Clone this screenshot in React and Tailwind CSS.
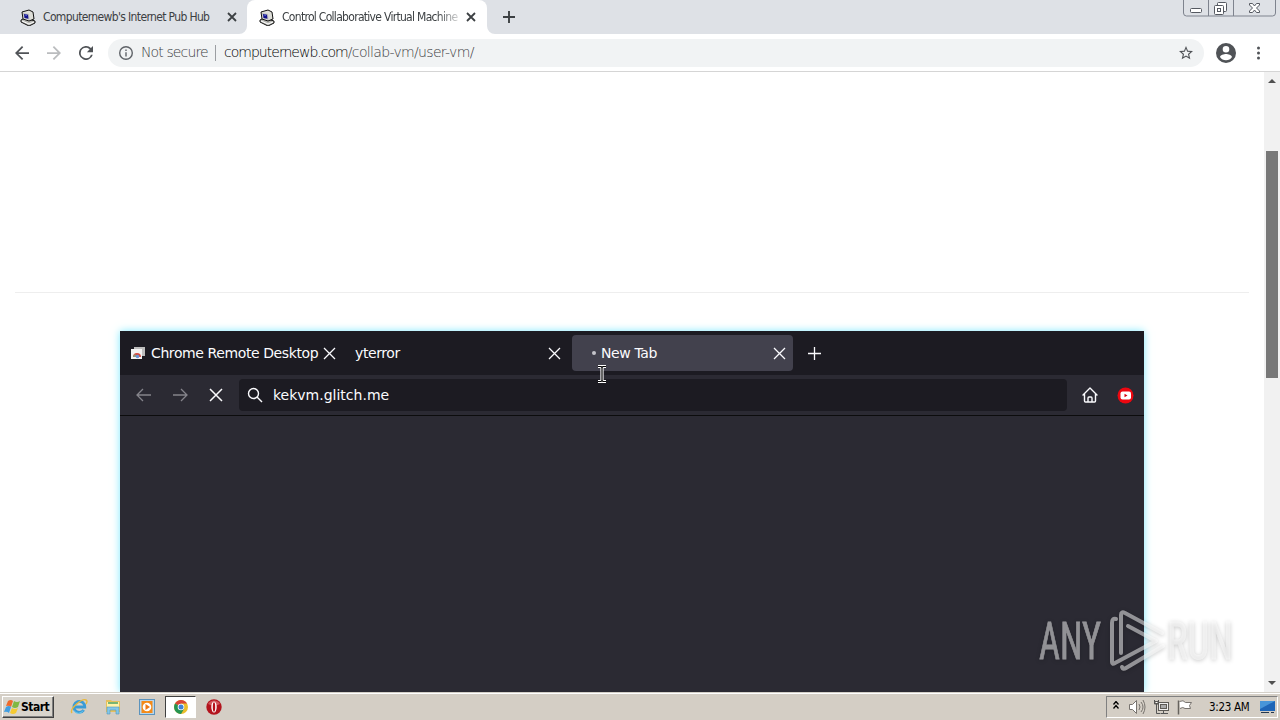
import React from 'react';

const uiFont = "font-['DejaVu_Sans_Condensed','DejaVu_Sans',sans-serif] [font-stretch:condensed]";
const lightFont = "font-['DejaVu_Sans_Light','DejaVu_Sans',sans-serif] [font-stretch:normal] font-extralight";

function PcIcon() {
  return (
    <svg width="16" height="17" viewBox="0 0 16 17" className="shrink-0">
      <path d="M1 11 5 9l10 3v2l-6 3-8-4z" fill="#b9b9b5" stroke="#111" strokeWidth="1" />
      <path d="m2 12 7 3 5-2" fill="none" stroke="#fff" />
      <path d="m2 3 7-2 4 2 1 7-5 2-6-2z" fill="#deded8" stroke="#111" />
      <path d="m3 4 6 1 .5 6L4 9z" fill="#bbb" />
      <path d="m4 5 4 .7.4 4L4.500 9z" fill="#10108c" />
      <path d="m5 6 2 .4" stroke="#5b68d8" />
    </svg>
  );
}

function Close({ size = 8, width = 1.8, color = '#3c4043' }) {
  return (
    <svg width={size} height={size} viewBox="0 0 8 8" fill="none" className="shrink-0 overflow-visible">
      <path d="m0 0 8 8M8 0 0 8" stroke={color} strokeWidth={width} vectorEffect="non-scaling-stroke" />
    </svg>
  );
}

function TabStrip() {
  return (
    <div className="flex h-[34px] shrink-0 bg-[#dee1e6] text-[12px] text-[#3c4043]">
      <div className="flex h-full w-[247px] items-center pl-5">
        <PcIcon />
        <span className="ml-[7px] w-[185px] whitespace-nowrap tracking-[-0.64px]">Computernewb's Internet Pub Hub</span>
        <Close />
      </div>
      <div className="relative flex h-full w-[240px] items-center rounded-t-lg bg-white pl-3">
        <PcIcon />
        <span className="ml-[7px] w-[178px] whitespace-nowrap tracking-[-0.7px] [mask-image:linear-gradient(to_right,#000_155px,transparent_182px)]">
          Control Collaborative Virtual Machine
        </span>
        <span className="ml-[7px] flex"><Close /></span>
        <svg width="8" height="8" className="absolute bottom-0 -left-2"><path d="M8 0a8 8 0 0 1-8 8h8z" fill="#fff" /></svg>
        <svg width="8" height="8" className="absolute bottom-0 -right-2"><path d="M0 0a8 8 0 0 0 8 8H0z" fill="#fff" /></svg>
      </div>
      <svg width="12" height="12" viewBox="0 0 12 12" className="mt-[11px] ml-4"><path d="M6 0v12M0 6h12" stroke="#3c4043" strokeWidth="1.9" /></svg>
      <svg width="94" height="17" viewBox="0 0 94 17" fill="none" stroke="#7e838e" className="mr-1 ml-auto">
        <path d="M1.500 0v13q0 3 3 3h86q3 0 3-3V0M26.500 0v16M51.500 0v16" />
        <rect x="8.500" y="8.500" width="11" height="4" rx="1" fill="#fff" stroke="#555961" />
        <rect x="35.500" y="2.500" width="9" height="9" rx="1" fill="#fff" stroke="#555961" />
        <rect x="32.500" y="5.500" width="9" height="9" rx="1" fill="#fff" stroke="#555961" />
        <rect x="35.500" y="8.500" width="3" height="3" stroke="#555961" />
        <path d="M67.500 3.500h3l2 2.500 2-2.500h3v1.500l-3 3 3 3v1.500h-3l-2-2.500-2 2.500h-3V11l3-3-3-3z" fill="#fff" stroke="#555961" />
      </svg>
    </div>
  );
}

function AddressBar() {
  return (
    <div className="flex h-[38px] shrink-0 items-center border-b border-[#d5d5d5] bg-white">
      <svg width="14" height="14" viewBox="4 4 16 16" className="ml-[15px]"><path fill="#505357" d="M20 11H7.830l5.590-5.590L12 4l-8 8 8 8 1.410-1.410L7.830 13H20z" /></svg>
      <svg width="14" height="14" viewBox="4 4 16 16" className="ml-[18px]"><path fill="#babcbe" d="m12 4-1.410 1.410L16.170 11H4v2h12.170l-5.580 5.590L12 20l8-8z" /></svg>
      <svg width="14" height="14" viewBox="4 4 16 16" className="ml-[18px]"><path fill="#505357" d="M17.650 6.350A8 8 0 1 0 19.730 14h-2.080A6 6 0 1 1 12 6c1.660 0 3.140.69 4.220 1.780L13 11h7V4z" /></svg>
      <div className="ml-[15px] flex h-7 w-[1096px] items-center rounded-full bg-[#f1f3f4] pl-[11px] text-[14px] text-[#3c4043]">
        <svg width="14" height="14" viewBox="2 2 20 20" className="shrink-0"><path fill="#5f6368" d="M11 7h2v2h-2zm0 4h2v6h-2zm1-9a10 10 0 1 0 0 20 10 10 0 0 0 0-20m0 18a8 8 0 1 1 0-16 8 8 0 0 1 0 16" /></svg>
        <span className={`ml-2 w-[74px] whitespace-nowrap tracking-[-0.88px] ${lightFont}`}>Not secure</span>
        <span className="h-4 w-px shrink-0 bg-[#9b9ea2]" />
        <span className={`ml-2 whitespace-nowrap tracking-[-0.66px] ${lightFont}`}><span className="tracking-[-0.98px] text-black">computernewb.com</span>/collab-vm/user-vm/</span>
        <svg width="14" height="14" viewBox="2 2 20 20" className="mr-[11px] ml-auto"><path fill="#505357" d="m22 9.240-7.190-.62L12 2 9.190 8.630 2 9.240l5.460 4.730L5.820 21 12 17.270 18.180 21l-1.630-7.030zM12 15.400l-3.760 2.270 1-4.280-3.320-2.880 4.380-.38L12 6.100l1.710 4.040 4.380.38-3.320 2.880 1 4.280z" /></svg>
      </div>
      <svg width="20" height="20" viewBox="2 2 20 20" className="ml-3"><path fill="#505357" fillRule="evenodd" d="M12 2a10 10 0 1 0 0 20 10 10 0 0 0 0-20m0 3a3.300 3.300 0 1 1 0 6.600A3.300 3.300 0 0 1 12 5m0 14.200A7.200 7.200 0 0 1 6 16c0-2 4-3.100 6-3.100s6 1.100 6 3.100a7.200 7.200 0 0 1-6 3.200" /></svg>
      <svg width="4" height="14" className="ml-[21px]" fill="#505357"><circle cx="1.500" cy="2" r="1.500" /><circle cx="1.500" cy="7" r="1.500" /><circle cx="1.500" cy="12" r="1.500" /></svg>
    </div>
  );
}

function RemoteScreen() {
  return (
    <div className="ml-[105px] h-[361px] w-[1024px] bg-[#2b2a33] font-['DejaVu_Sans',sans-serif] text-[14px] text-[#fbfbfe] [font-stretch:normal] shadow-[0_0_8px_#7eeaff]">
      <div className="flex h-11 items-center bg-[#1c1b22] tracking-[-0.4px]">
        <svg width="16" height="16" viewBox="0 0 16 16" className="ml-[10px] shrink-0">
          <path d="M4 2h11v9H4z" fill="#bdbdbd" />
          <path d="M1 4h11v10H1z" fill="#f3f3f3" />
          <path d="M3 12a4 4 0 0 1 8 0z" fill="#d44c43" />
          <path d="M3 12a4 4 0 0 1 2-3l2 3z" fill="#8a9a7b" />
          <circle cx="7.500" cy="11.500" r="1.800" fill="#6a92d8" />
        </svg>
        <span className="ml-[5px] w-[173px] whitespace-nowrap">Chrome Remote Desktop</span>
        <Close size={11} width={1.3} color="#fbfbfe" />
        <span className="ml-5 w-[194px]">yterror</span>
        <Close size={11} width={1.3} color="#fbfbfe" />
        <div className="ml-[12px] flex h-9 w-[221px] items-center rounded bg-[#42414d]">
          <span className="ml-5 size-1 rounded-full bg-[#c4c4ca]" />
          <span className="ml-[5px] w-[173px]">New Tab</span>
          <Close size={11} width={1.3} color="#fbfbfe" />
        </div>
        <svg width="13" height="13" className="ml-[15px]"><path d="M6.500 0v13M0 6.500h13" stroke="#fbfbfe" strokeWidth="1.300" /></svg>
      </div>
      <div className="flex h-[41px] items-center border-b border-[#0c0c0d]">
        <svg width="15" height="14" viewBox="0 0 15 14" fill="none" stroke="#85848b" strokeWidth="1.300" className="ml-4"><path d="M15 7H1M7 1 1 7l6 6" /></svg>
        <svg width="15" height="14" viewBox="0 0 15 14" fill="none" stroke="#85848b" strokeWidth="1.300" className="ml-[22px]"><path d="M0 7h14M8 1l6 6-6 6" /></svg>
        <span className="ml-[22px]"><Close size={12} width={1.5} color="#fbfbfe" /></span>
        <div className="ml-[17px] flex h-8 w-[828px] items-center rounded bg-[#1c1b22]">
          <svg width="16" height="16" viewBox="0 0 16 16" fill="none" stroke="#fbfbfe" strokeWidth="1.400" className="ml-2"><circle cx="6.500" cy="6.500" r="5" /><path d="m10 10 5 5" /></svg>
          <span className="ml-[10px]">kekvm.glitch.me</span>
        </div>
        <svg width="16" height="16" viewBox="0 0 16 16" fill="none" stroke="#fbfbfe" strokeWidth="1.400" strokeLinejoin="round" strokeLinecap="round" className="ml-[14.500px]"><path d="m1 8 7-7 7 7M2.500 7v7q0 1 1 1h9q1 0 1-1V7M6 15v-4q0-1 1-1h2q1 0 1 1v4" /></svg>
        <svg width="17" height="17" viewBox="0 0 17 17" className="ml-[19.500px]"><circle cx="8.500" cy="8.500" r="8" fill="#ed0710" /><rect x="3.500" y="4.500" width="10.500" height="8" rx="2" fill="#fff" /><path d="m7.500 6.800 3 1.700-3 1.700z" fill="#d8000c" /></svg>
      </div>
    </div>
  );
}

function Watermark() {
  return (
    <svg width="240" height="90" className="pointer-events-none absolute top-[600px] left-[1025px] overflow-visible drop-shadow-[0_1px_2px_rgba(0,0,0,0.4)]">
      <g opacity="0.5" fill="#fff">
        <text x="14" y="59" fontFamily="Roboto, sans-serif" fontSize="51" stroke="#fff" strokeWidth=".8" textLength="62" lengthAdjust="spacingAndGlyphs">ANY</text>
        <text x="142" y="59" fontFamily="Roboto, sans-serif" fontSize="51" stroke="#fff" strokeWidth=".8" textLength="66" lengthAdjust="spacingAndGlyphs">RUN</text>
        <g fill="none" stroke="#fff" strokeWidth="4" strokeLinejoin="round" strokeLinecap="round">
          <path d="M91 19q-4-1-4 4v39q0 3 3 1l41-22-28-15" />
          <path d="M96 53V15q0-4 4-2l37 20" />
          <path d="M97 67q1 3 4 1l37-22" />
        </g>
      </g>
    </svg>
  );
}

function Page() {
  return (
    <div className="flex h-[620px] shrink-0 bg-white">
      <div className="min-w-0 flex-1 overflow-hidden px-[15px] pt-[220px]">
        <hr className="mb-[38px] border-[#eee]" />
        <RemoteScreen />
      </div>
      <div className="flex w-4 shrink-0 flex-col items-center bg-[#f1f1f1]">
        <svg width="8" height="4" className="mt-[7px]"><path d="m4 0 4 4H0z" fill="#505050" /></svg>
        <div className="mt-[68px] h-[227px] w-3 bg-[#787878]" />
        <svg width="8" height="4" className="mt-auto mb-[7px]"><path d="M0 0h8L4 4z" fill="#505050" /></svg>
      </div>
    </div>
  );
}

function TaskBar() {
  return (
    <div className="flex h-7 shrink-0 items-center border-t border-[#d4d0c8] bg-[#d4cec5] text-black shadow-[inset_0_1px_#fff]">
      <div className="ml-[2px] flex h-[22px] w-[52px] items-center border border-t-white border-r-[#404040] border-b-[#404040] border-l-white bg-[#d8d4cc] shadow-[inset_-1px_-1px_#808080]">
        <svg width="17" height="16" viewBox="0 0 17 16" className="ml-px shrink-0">
          <path d="M4 2q3-2 5 0L7 8Q5 6 2 7z" fill="#ee6a2c" />
          <path d="M10 2q3 2 6 0l-2 6q-3 2-6 0z" fill="#80b843" />
          <path d="M2 8q3-2 5 0l-2 6Q3 12 0 13z" fill="#429ee1" />
          <path d="M8 9q3 2 6 0l-2 5q-3 2-6 0z" fill="#f5ca32" />
        </svg>
        <span className="text-[12px] font-bold tracking-[-0.5px]">Start</span>
      </div>
      <svg width="18" height="18" viewBox="0 0 18 18" fill="none" className="ml-4">
        <path d="M13.800 12a5.500 5.500 0 1 1 1-3H5" stroke="#3a9bd6" strokeWidth="2.800" />
        <path d="M13 12.500a5 5 0 0 1-9 0" stroke="#72cff0" strokeWidth="1" />
        <path d="M2 15C-1 11 12 0 16 2q2 1 0 4" stroke="#e8b83d" strokeWidth="1.400" />
      </svg>
      <svg width="16" height="16" viewBox="0 0 16 16" className="ml-[17px]">
        <path d="M1 1h5l1 1h8v11H1z" fill="#e6c05c" />
        <path d="M2 3h12v8H2z" fill="#fff2a8" /><path d="M3 4h10" stroke="#79b573" strokeWidth="2" />
        <path d="M2 8h12v7h-3v-4H5v4H2z" fill="#83c7e8" stroke="#5299bd" strokeWidth=".6" />
      </svg>
      <svg width="16" height="16" viewBox="0 0 16 16" className="ml-[18px]">
        <rect x=".5" y=".5" width="15" height="15" fill="#b8d6ec" stroke="#5b93bd" />
        <rect x="2.500" y="2" width="11" height="12" fill="#f48a18" /><circle cx="8" cy="8" r="4.300" fill="#fff" /><path d="m6.500 5 4.500 3-4.500 3z" fill="#ed7815" />
      </svg>
      <div className="ml-[10px] flex h-[22px] w-[31px] items-center justify-center border border-t-[#404040] border-r-white border-b-white border-l-[#404040] bg-white">
        <svg width="14" height="14" viewBox="0 0 14 14">
          <circle cx="7" cy="7" r="7" fill="#eabd2b" />
          <path d="M7 7 1 3.500a7 7 0 0 1 12 0H7z" fill="#d94437" />
          <path d="M7 7 1 3.500A7 7 0 0 0 7 14l3-5z" fill="#269452" />
          <circle cx="7" cy="7" r="3.300" fill="#fff" /><circle cx="7" cy="7" r="2.500" fill="#3f82d5" />
        </svg>
      </div>
      <svg width="16" height="16" viewBox="0 0 16 16" className="ml-[10px]"><circle cx="8" cy="8" r="7.700" fill="#b3141d" /><path d="M2 5a7 7 0 0 1 12 0q-6 3-12 0" fill="#d3565b" /><ellipse cx="8" cy="8" rx="2.700" ry="5.500" fill="#fff" /><ellipse cx="8" cy="8" rx="1.200" ry="4.700" fill="#b70f18" /></svg>
      <div className="mr-[2px] ml-auto flex h-[22px] w-[172px] items-center border border-t-[#808080] border-r-white border-b-white border-l-[#808080]">
        <svg width="6" height="8" fill="none" stroke="#000" strokeWidth="1.300" className="mb-[3px] ml-[6px] shrink-0"><path d="m.5 3.500 2.500-3 2.500 3m-5 4 2.500-3 2.500 3" /></svg>
        <svg width="17" height="16" viewBox="0 0 17 16" fill="none" stroke="#77736e" className="ml-[10px] shrink-0"><path d="M.5 5.500h3l4-4v13l-4-4h-3z" fill="#fff" /><path d="M10 5q2 3 0 6m2-8q4 5 0 10m2-12q4 7 0 14" /></svg>
        <svg width="17" height="16" viewBox="0 0 17 16" fill="none" stroke="#5d5a55" className="ml-[7px] shrink-0"><rect x="5.500" y="3.500" width="10" height="8" fill="#eee" /><rect x="7.500" y="5.500" width="6" height="4" fill="#aaa" /><path d="M8 14.500h7M10.500 12v2M1.500 1v4h4V1M3.500 5v9.500h4" stroke="#555" /><path d="M2 2.500h3v2H2z" fill="#fff" /></svg>
        <svg width="16" height="16" viewBox="0 0 16 16" className="ml-[7px] shrink-0"><path d="M2.500 2.500q4-2 6 1h6l-2 3 1 3H8q-2-2-5 0" fill="#fff" stroke="#77736e" /><path d="M1.500 1.500v14" stroke="#66625d" strokeWidth="1.500" /></svg>
        <span className="mt-[2px] ml-[16px] w-[50px] whitespace-nowrap text-[11.500px] tracking-[-0.3px]">3:23 AM</span>
        <svg width="16" height="14" viewBox="0 0 16 14" className="ml-px shrink-0"><path d="M0 1h15v10H0z" fill="#1e65b7" /><path d="M0 1h15L0 9z" fill="#4795d9" /><path d="M1 12.500h8m2 0h3" stroke="#25374e" /></svg>
      </div>
    </div>
  );
}

export default function App() {
  return (
    <div className={`relative flex h-[720px] w-[1280px] flex-col overflow-hidden bg-white ${uiFont}`}>
      <TabStrip />
      <AddressBar />
      <Page />
      <TaskBar />
      <Watermark />
      <svg width="10" height="18" viewBox="0 0 10 18" fill="none" className="pointer-events-none absolute top-[365px] left-[597px] overflow-visible">
        <path d="M1 1.500h3l1 1 1-1h3M5 2.500v13M1 16.500h3l1-1 1 1h3" stroke="#fff" strokeWidth="3.200" />
        <path d="M1 1.500h3l1 1 1-1h3M5 2.500v13M1 16.500h3l1-1 1 1h3" stroke="#000" strokeWidth="1.200" />
      </svg>
    </div>
  );
}
